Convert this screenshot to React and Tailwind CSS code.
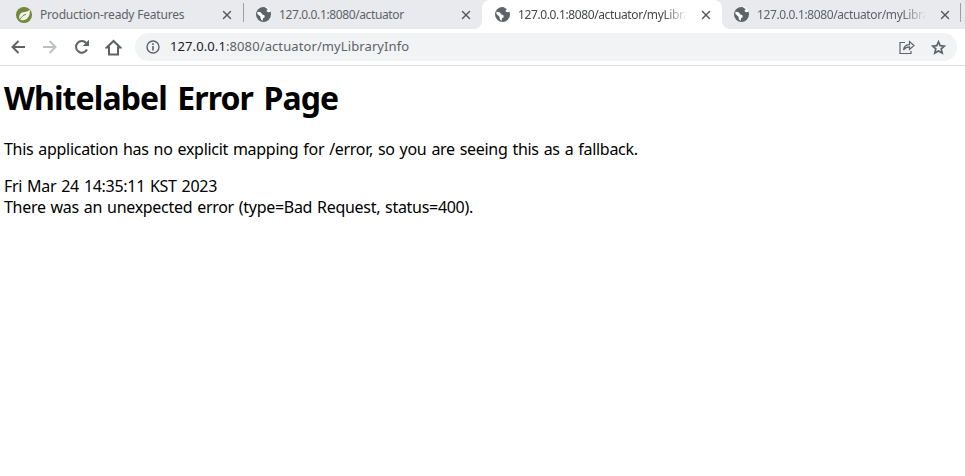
import { X } from 'lucide-react';

function Globe() {
  return (
    <svg width="15" height="15" viewBox="0 0 16 16" className="shrink-0">
      <circle cx="8" cy="8" r="8" fill="#5f6368" />
      <path d="M1.500 5l3.500.5L6.800 8 9 8.800l.3 2-1.800 1.200-.5 3-1.800-2-.6-3L1.500 7.500zM9.500 .800l3.200 1.400-1.700 2 2 1.300 2.500-.5-1.300-3.200-3-2z" fill="#fff" />
    </svg>
  );
}

function SpringLeaf() {
  return (
    <svg width="16" height="16" viewBox="0 0 16 16" className="shrink-0">
      <circle cx="8" cy="8" r="8" fill="#70883a" />
      <path d="M13.800 2.500c.6 5-1.300 10-6.300 10.700-1.800.2-3.300-.3-4-1.300C2.500 9 4 5.300 8.500 5c2.200-.1 4.300-1 5.300-2.500z" fill="#f4f2e6" />
      <path d="M4 12.500c1.500-2.700 3.300-4.300 6-5.300" stroke="#70883a" strokeWidth="1" fill="none" />
    </svg>
  );
}

function Back({ color }) {
  return (
    <svg width="16" height="16" viewBox="0 0 16 16" fill="none" stroke={color} strokeWidth="2">
      <path d="M15 8H2.500M8.500 2L2.500 8l6 6" />
    </svg>
  );
}

function Forward({ color }) {
  return (
    <svg width="16" height="16" viewBox="0 0 16 16" fill="none" stroke={color} strokeWidth="2">
      <path d="M1 8h12.500M7.500 2l6 6-6 6" />
    </svg>
  );
}

function Reload() {
  return (
    <svg width="16" height="16" viewBox="0 0 16 16" fill="none">
      <path d="M13 10.500A5.800 5.800 0 1 1 12.200 4" stroke="#5f6368" strokeWidth="2" />
      <path d="M15 .800V7H8.800z" fill="#5f6368" />
    </svg>
  );
}

function HomeIcon() {
  return (
    <svg width="17" height="17" viewBox="0 0 17 17" fill="none" stroke="#5f6368" strokeWidth="2">
      <path d="M8.500 2L1.800 8.500h2.200V15.500h9V8.500h2.200z" strokeLinejoin="miter" />
    </svg>
  );
}

function InfoIcon() {
  return (
    <svg width="14" height="14" viewBox="0 0 14 14" fill="none">
      <circle cx="7" cy="7" r="6" stroke="#5f6368" strokeWidth="1.400" />
      <path d="M6.200 6h1.600v4.500H6.200zM6.200 3.300h1.600v1.600H6.200z" fill="#5f6368" />
    </svg>
  );
}

function Share() {
  return (
    <svg width="16" height="16" viewBox="0 0 16 16" fill="none" stroke="#5f6368" strokeWidth="1.200">
      <path d="M6 3.500H1v11h11V12" />
      <path d="M4.500 11c.4-3 2.500-5.300 6-5.300V2.500l4.500 4-4.500 4V7.800c-2.500 0-4.500 1-6 3.200z" />
    </svg>
  );
}

function StarIcon() {
  return (
    <svg width="15" height="15" viewBox="0 0 15 15" fill="none" stroke="#5f6368" strokeWidth="1.700" strokeLinejoin="miter">
      <path d="M7.500 1.800l1.700 3.900 4.200.4-3.200 2.800 1 4.200-3.700-2.200-3.700 2.200 1-4.200L1.600 6.100l4.200-.4z" />
    </svg>
  );
}

function Tab({ icon, title, active, fade, url, className }) {
  return (
    <div className={`flex h-full items-center ${active ? 'bg-white rounded-t-lg' : 'bg-[#e8eaed]'} ${className}`}>
      {icon}
      <span className={`ml-2 min-w-0 flex-1 overflow-hidden whitespace-nowrap text-[12px] ${url ? 'tracking-[-0.38px]' : 'tracking-[-0.2px]'} ${active ? 'text-[#45474a]' : 'text-[#5f6368]'} ${fade ? '[mask-image:linear-gradient(to_right,black_84%,transparent_98%)]' : ''}`}>
        {title}
      </span>
      <X size={14} strokeWidth={2.400} className="ml-[8px] shrink-0 text-[#54575c]" />
    </div>
  );
}

export default function App() {
  return (
    <div className="h-[476px] w-[965px] overflow-hidden bg-white font-['Noto_Sans',sans-serif] text-black">
      {/* Tab strip */}
      <div className="flex h-[29px] bg-[#e8eaed]">
        <Tab icon={<SpringLeaf />} title="Production-ready Features" className="w-[243px] pl-[16px] pr-[9px]" />
        <div className="mt-[3px] h-[19px] w-px bg-[#9aa0a6]" />
        <div className="h-full bg-white">
          <Tab icon={<Globe />} title="127.0.0.1:8080/actuator" url className="w-[238px] rounded-br-lg pl-[12px] pr-[9px]" />
        </div>
        <Tab icon={<Globe />} title="127.0.0.1:8080/actuator/myLibraryInfo" url active fade className="w-[240px] pl-[13px] pr-[9px]" />
        <div className="h-full bg-white">
          <Tab icon={<Globe />} title="127.0.0.1:8080/actuator/myLibraryInfo" url fade className="w-[238px] rounded-bl-lg pl-[12px] pr-[8px]" />
        </div>
        <div className="mt-[3px] h-[19px] w-px bg-[#9aa0a6]" />
      </div>

      {/* Toolbar */}
      <div className="flex h-[37px] items-center border-b border-[#d9dbde] pl-[10px] pr-[8px]">
        <Back color="#5f6368" />
        <div className="ml-[16px]">
          <Forward color="#bdc1c6" />
        </div>
        <div className="ml-[16px]">
          <Reload />
        </div>
        <div className="ml-[15px]">
          <HomeIcon />
        </div>
        <div className="ml-[13px] flex h-[28px] flex-1 items-center rounded-full bg-[#f1f3f4] pl-[11px] pr-[11px]">
          <InfoIcon />
          <span className="ml-[10px] flex-1 text-[13px] tracking-[0.1px] text-[#5f6368]">
            <span className="text-[#202124]">127.0.0.1</span>:8080/actuator/myLibraryInfo
          </span>
          <Share />
          <div className="ml-[16px]">
            <StarIcon />
          </div>
        </div>
      </div>

      {/* Page */}
      <div className="px-[4px] tracking-[-0.3px] [word-spacing:1.1px]">
        <h1 className="mt-[8px] text-[32px] font-bold leading-[48px] tracking-[-0.9px] [word-spacing:3px]">Whitelabel Error Page</h1>
        <p className="mt-[15px] text-[16px] leading-[24px]">
          This application has no explicit mapping for /error, so you are seeing this as a fallback.
        </p>
        <div className="mt-[15px] text-[16px] leading-[21px]">Fri Mar 24 14:35:11 KST 2023</div>
        <div className="text-[16px] leading-[21px]">There was an unexpected error (type=Bad Request, status=400).</div>
      </div>
    </div>
  );
}
